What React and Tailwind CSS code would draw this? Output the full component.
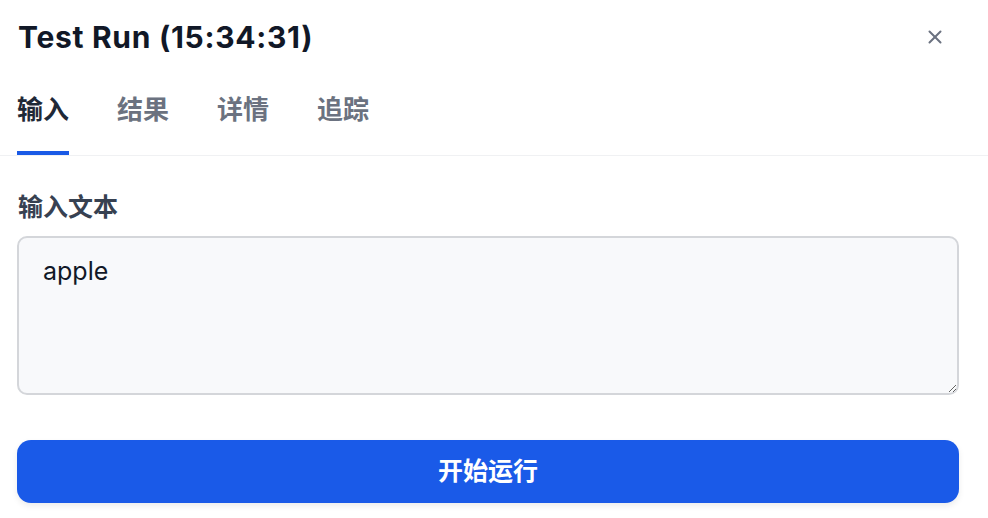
import { X } from "lucide-react";

const font = { fontFamily: 'Inter, "Noto Sans CJK SC", sans-serif' };

export default function App() {
  const tabs = ["输入", "结果", "详情", "追踪"];

  return (
    <div className="w-[988px] h-[518px] bg-white overflow-hidden" style={font}>
      {/* HEADER */}
      <div className="flex items-center justify-between h-[73px] pl-[18px] pr-[42px]">
        <h1 className="text-[30px] leading-[38px] font-bold text-[#111827] tracking-[0.7px]">
          Test Run (15:34:31)
        </h1>
        <X size={22} strokeWidth={2.2} className="text-[#6b7280]" />
      </div>

      {/* TABS */}
      <div className="flex gap-[48px] px-[17px] border-b border-[#f0f1f3]">
        {tabs.map((t, i) => (
          <div
            key={t}
            className={
              i === 0
                ? "pt-[18px] pb-[23px] border-b-4 border-[#1a5ae6] text-[26px] leading-[37px] font-semibold text-[#1f2937]"
                : "pt-[18px] pb-[23px] border-b-4 border-transparent text-[26px] leading-[37px] font-semibold text-[#6b7280]"
            }
          >
            {t}
          </div>
        ))}
      </div>

      {/* BODY */}
      <div className="pl-[17px] pr-[29px] pt-[35px]">
        <label className="block pl-[1px] text-[25px] leading-[32px] font-semibold text-[#374151]">
          输入文本
        </label>
        <textarea
          defaultValue="apple"
          className="mt-[13px] block w-full h-[159px] rounded-[10px] border-2 border-[#d4d6da] bg-[#f8f9fb] pl-[24px] pt-[17px] text-[25px] leading-[32px] text-[#111827] outline-none caret-[#1a5ae6] resize-y"
          style={font}
        />
        <button className="mt-[45px] w-full h-[63px] rounded-[14px] bg-[#1a5ae8] text-white text-[25px] font-semibold shadow-[0_3px_6px_rgba(0,0,0,0.08)]">
          开始运行
        </button>
      </div>
    </div>
  );
}
